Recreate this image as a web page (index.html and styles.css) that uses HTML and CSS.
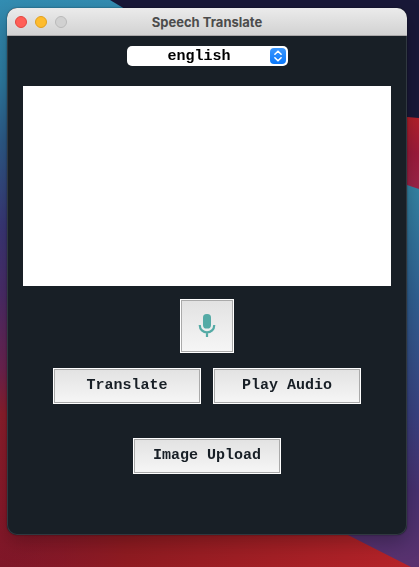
FILE: index.html
```html
<!DOCTYPE html>
<html lang="en">
<head>
<meta charset="utf-8">
<meta name="viewport" content="width=device-width, initial-scale=1">
<title>Speech Translate</title>
<link rel="stylesheet" href="styles.css">
</head>
<body>
<svg class="wallpaper" viewBox="0 0 419 567" preserveAspectRatio="none" aria-hidden="true">
  <defs>
    <linearGradient id="left" x1="0" y1="0" x2="0" y2="567" gradientUnits="userSpaceOnUse">
      <stop offset="0" stop-color="#338db2"/>
      <stop offset=".14" stop-color="#2d7ba1"/>
      <stop offset=".25" stop-color="#2d5b89"/>
      <stop offset=".4" stop-color="#3a3777"/>
      <stop offset=".52" stop-color="#4b2c69"/>
      <stop offset=".65" stop-color="#6c2350"/>
      <stop offset=".73" stop-color="#8c1e2c"/>
      <stop offset=".9" stop-color="#89192a"/>
      <stop offset="1" stop-color="#7e1728"/>
    </linearGradient>
    <linearGradient id="bottom" x1="0" y1="0" x2="419" y2="0" gradientUnits="userSpaceOnUse">
      <stop offset="0" stop-color="#8c192a" stop-opacity="0"/>
      <stop offset=".3" stop-color="#8f1b21"/>
      <stop offset="1" stop-color="#b72329"/>
    </linearGradient>
    <linearGradient id="ribbon" x1="0" y1="117" x2="0" y2="190" gradientUnits="userSpaceOnUse">
      <stop offset="0" stop-color="#b3202a"/>
      <stop offset=".5" stop-color="#9c1b3b"/>
      <stop offset="1" stop-color="#9b2549"/>
    </linearGradient>
    <linearGradient id="right" x1="0" y1="185" x2="0" y2="567" gradientUnits="userSpaceOnUse">
      <stop offset="0" stop-color="#3484a4"/>
      <stop offset=".3" stop-color="#305f91"/>
      <stop offset=".6" stop-color="#394180"/>
      <stop offset=".8" stop-color="#47306f"/>
      <stop offset="1" stop-color="#5a326f"/>
    </linearGradient>
  </defs>
  <rect width="419" height="567" fill="url(#left)"/>
  <path d="M110 0 160 30 300 100 419 120V0Z" fill="#191838"/>
  <path d="M300 100 407 117 419 118V190L300 150Z" fill="url(#ribbon)"/>
  <path d="M300 150 407 185 419 189V567H340L279 500Z" fill="url(#right)"/>
  <path d="M0 500H279L411 567H0Z" fill="url(#bottom)"/>
</svg>

<main class="window">
  <header class="titlebar">
    <div class="lights">
      <button class="light close" type="button" aria-label="Close"></button>
      <button class="light minimize" type="button" aria-label="Minimize"></button>
      <button class="light zoom" type="button" aria-label="Zoom" disabled></button>
    </div>
    <h1 class="title">Speech Translate</h1>
  </header>

  <form class="content">
    <div class="language">
      <select class="language-select" aria-label="Language">
        <option>english</option>
      </select>
      <svg class="stepper" viewBox="0 0 16 16" aria-hidden="true">
        <path d="M4.9 6.2 8 3.2l3.1 3M4.9 9.8 8 12.8l3.1-3"/>
      </svg>
    </div>

    <textarea class="transcript" aria-label="Text"></textarea>

    <button class="button mic" type="button" aria-label="Record speech">
      <svg class="mic-icon" viewBox="0 0 18 24" aria-hidden="true">
        <rect class="mic-body" x="5" y="0" width="8" height="14.5" rx="3.6"/>
        <path class="mic-stand" d="M1.8 11v.4a7.2 7 0 0 0 14.4 0V11M9 18.4V23"/>
      </svg>
    </button>

    <div class="actions">
      <button class="button" type="button">Translate</button>
      <button class="button" type="button">Play Audio</button>
    </div>

    <button class="button" type="button">Image Upload</button>
  </form>
</main>
</body>
</html>
```

FILE: styles.css
```css
* {
  box-sizing: border-box;
}

body {
  margin: 0;
  min-height: 100vh;
  padding: 8px 12px 32px 7px;
  display: flex;
  background: #191838;
  font-family: "Liberation Mono", "Courier New", monospace;
}

.wallpaper {
  position: fixed;
  inset: 0;
  width: 100%;
  height: 100%;
  z-index: -1;
}

.window {
  flex: 1;
  display: flex;
  flex-direction: column;
  overflow: hidden;
  border-radius: 10px;
  background: #181f26;
  box-shadow: inset 0 0 0 1px #303840, 0 0 2px rgba(0, 0, 0, 0.5), 0 8px 20px rgba(0, 0, 0, 0.25);
}

.titlebar {
  display: grid;
  grid-template-columns: 1fr auto 1fr;
  align-items: center;
  height: 28px;
  padding: 0 8px;
  border-bottom: 1px solid #aaa8a9;
  background: linear-gradient(#ebebeb, #d2d2d2);
}

.lights {
  display: flex;
  gap: 8px;
}

.light {
  width: 12px;
  height: 12px;
  padding: 0;
  border: 1px solid;
  border-radius: 50%;
}

.close {
  background: #ff5f57;
  border-color: #e2463f;
}

.minimize {
  background: #febc2e;
  border-color: #e0a01e;
}

.zoom {
  background: #d1d1d1;
  border-color: #b9b9b9;
}

.title {
  margin: 0;
  font: bold 13px/16px Inter, "Liberation Sans", sans-serif;
  color: #4c4c4c;
}

.content {
  flex: 1;
  display: flex;
  flex-direction: column;
  align-items: center;
  padding: 10px 16px;
}

.language {
  position: relative;
  width: 161px;
  margin-bottom: 20px;
}

.language-select {
  display: block;
  appearance: none;
  width: 100%;
  height: 20px;
  padding: 1px 16px 0 0;
  border: 0;
  border-radius: 5px;
  background: #fff;
  color: #000;
  font: bold 15px/20px "Liberation Mono", "Courier New", monospace;
  text-align: center;
  text-align-last: center;
}

.stepper {
  position: absolute;
  top: 2px;
  right: 2px;
  width: 16px;
  height: 16px;
  border-radius: 4px;
  background: linear-gradient(#3b97fd, #0a78fb);
  fill: none;
  stroke: #fff;
  stroke-width: 1.6;
  stroke-linecap: round;
  stroke-linejoin: round;
  pointer-events: none;
}

.transcript {
  display: block;
  width: 100%;
  height: 200px;
  margin-bottom: 13px;
  padding: 4px;
  border: 0;
  resize: none;
  background: #fff;
  color: #181f26;
  font: 15px/20px "Liberation Mono", "Courier New", monospace;
}

.button {
  display: flex;
  align-items: center;
  justify-content: center;
  width: 148px;
  height: 36px;
  padding: 0;
  border: 1px solid #fff;
  border-radius: 0;
  background: linear-gradient(#e2e2e2, #f6f6f6);
  box-shadow: inset 0 0 0 1px #aaa;
  color: #181f26;
  font: bold 15px/20px "Liberation Mono", "Courier New", monospace;
}

.mic {
  width: 54px;
  height: 54px;
  margin-bottom: 15px;
}

.mic-icon {
  width: 18px;
  height: 24px;
}

.mic-body {
  fill: #54aaa5;
}

.mic-stand {
  fill: none;
  stroke: #54aaa5;
  stroke-width: 2.2;
}

.actions {
  display: flex;
  gap: 12px;
  margin-bottom: 34px;
}
```
